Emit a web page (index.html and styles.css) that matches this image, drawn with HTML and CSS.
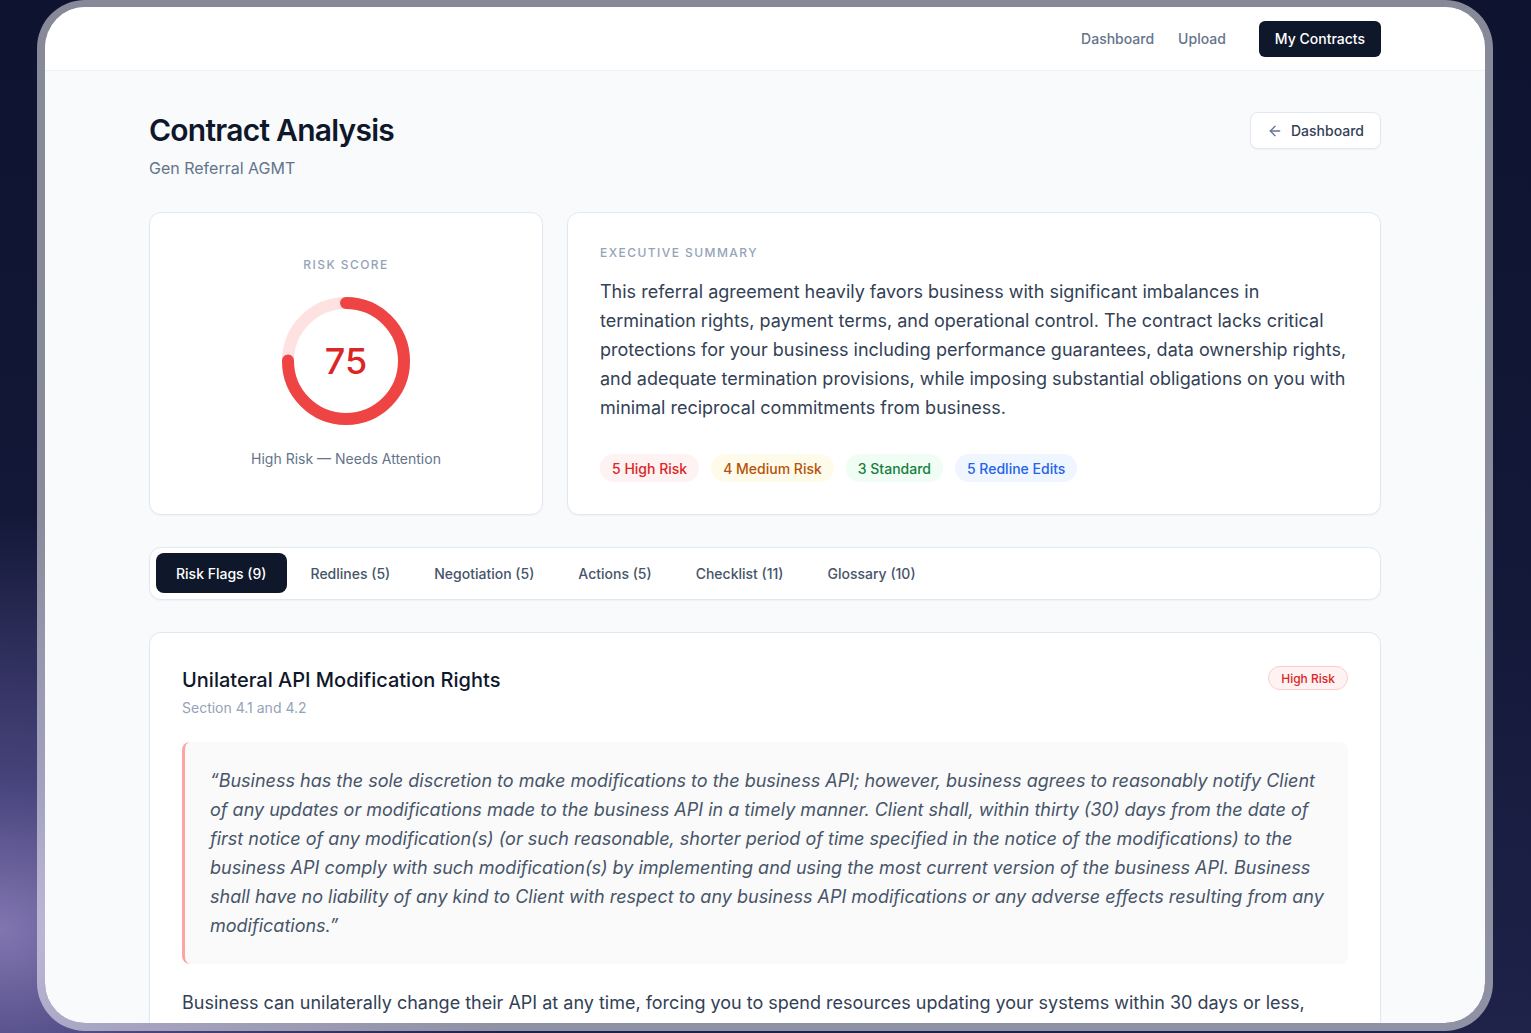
FILE: index.html
```html
<!DOCTYPE html>
<html lang="en">
<head>
<meta charset="utf-8">
<title>Contract Analysis</title>
<link rel="stylesheet" href="styles.css">
</head>
<body>
<div class="device">
  <div class="screen">
    <header class="topbar">
      <div class="container topbar-inner">
        <nav class="nav">
          <a class="nav-link">Dashboard</a>
          <a class="nav-link">Upload</a>
          <a class="nav-btn">My Contracts</a>
        </nav>
      </div>
    </header>
    <main class="container main">
      <div class="page-head">
        <div>
          <h1 class="title">Contract Analysis</h1>
          <p class="subtitle">Gen Referral AGMT</p>
        </div>
        <button class="back-btn">
          <svg width="16" height="16" viewBox="0 0 24 24" fill="none" stroke="currentColor" stroke-width="2" stroke-linecap="round" stroke-linejoin="round"><path d="M19 12H5"/><path d="M12 19l-7-7 7-7"/></svg>
          Dashboard
        </button>
      </div>

      <section class="overview">
        <div class="card score-card">
          <div class="eyebrow">Risk Score</div>
          <div class="ring">
            <svg width="128" height="128" viewBox="0 0 128 128">
              <circle cx="64" cy="64" r="58" fill="none" stroke="#fee2e2" stroke-width="12"/>
              <circle cx="64" cy="64" r="58" fill="none" stroke="#ef4444" stroke-width="12" stroke-linecap="round" stroke-dasharray="273.3 364.4" transform="rotate(-90 64 64)"/>
            </svg>
            <span class="ring-value">75</span>
          </div>
          <div class="score-label">High Risk — Needs Attention</div>
        </div>
        <div class="card summary-card">
          <div class="eyebrow">Executive Summary</div>
          <p class="summary-text">This referral agreement heavily favors business with significant imbalances in termination rights, payment terms, and operational control. The contract lacks critical protections for your business including performance guarantees, data ownership rights, and adequate termination provisions, while imposing substantial obligations on you with minimal reciprocal commitments from business.</p>
          <div class="pills">
            <span class="pill pill-red">5 High Risk</span>
            <span class="pill pill-amber">4 Medium Risk</span>
            <span class="pill pill-green">3 Standard</span>
            <span class="pill pill-blue">5 Redline Edits</span>
          </div>
        </div>
      </section>

      <div class="tabs">
        <button class="tab active">Risk Flags (9)</button>
        <button class="tab">Redlines (5)</button>
        <button class="tab">Negotiation (5)</button>
        <button class="tab">Actions (5)</button>
        <button class="tab">Checklist (11)</button>
        <button class="tab">Glossary (10)</button>
      </div>

      <article class="card flag-card">
        <div class="flag-head">
          <div>
            <h2 class="flag-title">Unilateral API Modification Rights</h2>
            <div class="flag-section">Section 4.1 and 4.2</div>
          </div>
          <span class="badge">High Risk</span>
        </div>
        <blockquote class="quote">“Business has the sole discretion to make modifications to the business API; however, business agrees to reasonably notify Client of any updates or modifications made to the business API in a timely manner. Client shall, within thirty (30) days from the date of first notice of any modification(s) (or such reasonable, shorter period of time specified in the notice of the modifications) to the business API comply with such modification(s) by implementing and using the most current version of the business API. Business shall have no liability of any kind to Client with respect to any business API modifications or any adverse effects resulting from any modifications.”</blockquote>
        <p class="flag-text">Business can unilaterally change their API at any time, forcing you to spend resources updating your systems within 30 days or less, potentially disrupting your operations with no recourse or compensation.</p>
      </article>
    </main>
  </div>
</div>
</body>
</html>
```

FILE: styles.css
```css
* { box-sizing: border-box; }
html, body { margin: 0; padding: 0; }
body {
  width: 1531px;
  height: 1033px;
  overflow: hidden;
  font-family: Inter, "Noto Sans", "Liberation Sans", sans-serif;
  background:
    radial-gradient(ellipse 520px 420px at 0px 930px, rgba(135,122,182,0.95) 0%, rgba(96,88,156,0.65) 35%, rgba(30,32,78,0) 100%),
    linear-gradient(180deg, #0e1330 0%, #131838 55%, #1f2249 100%);
}
.device {
  margin-left: 37px;
  width: 1456px;
  height: 1031px;
  border-style: solid;
  border-color: rgba(255,255,255,0.5);
  border-width: 7px 8px 8px 8px;
  border-radius: 48px;
  overflow: hidden;
}
.screen {
  height: 100%;
  background: #f8fafc;
  overflow: hidden;
}
.container {
  max-width: 1280px;
  margin: 0 auto;
  padding: 0 24px;
}
.topbar {
  background: #ffffff;
  border-bottom: 1px solid #eef1f5;
  height: 64px;
}
.topbar-inner {
  height: 63px;
  display: flex;
  align-items: center;
  justify-content: flex-end;
}
.nav { display: flex; align-items: center; }
.nav-link {
  font-size: 14px;
  font-weight: 500;
  color: #64748b;
  margin-right: 24px;
}
.nav-link:first-child { margin-left: 1px; }
.nav-link + .nav-link { margin-right: 33px; }
.nav-btn {
  height: 36px;
  display: inline-flex;
  align-items: center;
  padding: 0 16px;
  background: #0f172a;
  color: #ffffff;
  font-size: 14px;
  font-weight: 500;
  border-radius: 6px;
}
.main { padding-top: 41px; }
.page-head {
  display: flex;
  justify-content: space-between;
  align-items: flex-start;
}
.title {
  margin: 0;
  font-size: 30px;
  line-height: 36px;
  font-weight: 600;
  color: #0f172a;
  letter-spacing: -0.75px;
}
.subtitle {
  margin: 8px 0 0;
  font-size: 16px;
  line-height: 24px;
  color: #64748b;
}
.back-btn {
  height: 37px;
  display: inline-flex;
  align-items: center;
  gap: 8px;
  padding: 0 16px;
  background: #fff;
  border: 1px solid #e2e8f0;
  border-radius: 8px;
  font-family: inherit;
  font-size: 14px;
  font-weight: 500;
  color: #334155;
  box-shadow: 0 1px 2px rgba(15,23,42,0.04);
}
.back-btn svg { color: #64748b; }
.overview {
  margin-top: 32px;
  display: grid;
  grid-template-columns: 394px 1fr;
  gap: 24px;
}
.card {
  background: #ffffff;
  border: 1px solid #e2e8f0;
  border-radius: 12px;
  box-shadow: 0 1px 2px rgba(15,23,42,0.04);
}
.eyebrow {
  font-size: 12px;
  line-height: 16px;
  font-weight: 500;
  letter-spacing: 0.12em;
  text-transform: uppercase;
  color: #94a3b8;
}
.score-card {
  display: flex;
  flex-direction: column;
  align-items: center;
  justify-content: center;
  gap: 24px;
  padding: 32px 32px 34px;
}
.ring {
  position: relative;
  width: 128px;
  height: 128px;
}
.ring svg { display: block; }
.ring-value {
  position: absolute;
  inset: 0;
  display: flex;
  align-items: center;
  justify-content: center;
  font-size: 36px;
  font-weight: 500;
  color: #dc2626;
}
.score-label {
  font-size: 14px;
  line-height: 20px;
  color: #64748b;
}
.summary-card { padding: 32px; }
.summary-text {
  margin: 16px 0 0;
  font-size: 18px;
  line-height: 29px;
  color: #334155;
}
.pills {
  margin-top: 32px;
  display: flex;
  gap: 12px;
}
.pill {
  height: 28px;
  display: inline-flex;
  align-items: center;
  padding: 0 12px;
  border-radius: 999px;
  font-size: 14px;
  font-weight: 500;
}
.pill-red { background: #fef2f2; color: #dc2626; }
.pill-amber { background: #fffbeb; color: #b45309; }
.pill-green { background: #f0fdf4; color: #15803d; }
.pill-blue { background: #eff6ff; color: #2563eb; }
.tabs {
  margin-top: 32px;
  display: flex;
  gap: 4px;
  padding: 5px 6px 6px;
  background: #ffffff;
  border: 1px solid #e2e8f0;
  border-radius: 12px;
  box-shadow: 0 1px 2px rgba(15,23,42,0.04);
}
.tab {
  height: 40px;
  padding: 0 20px;
  border: 0;
  background: transparent;
  border-radius: 8px;
  font-family: inherit;
  font-size: 14px;
  font-weight: 500;
  color: #475569;
}
.tab.active { background: #0f172a; color: #ffffff; }
.flag-card {
  margin-top: 32px;
  padding: 33px 32px 32px;
}
.flag-head {
  display: flex;
  justify-content: space-between;
  align-items: flex-start;
}
.flag-title {
  margin: 0;
  font-size: 20px;
  line-height: 28px;
  font-weight: 500;
  color: #0f172a;
}
.flag-section {
  margin-top: 4px;
  font-size: 14px;
  line-height: 20px;
  color: #94a3b8;
}
.badge {
  height: 24px;
  display: inline-flex;
  align-items: center;
  padding: 0 12px;
  border-radius: 999px;
  background: #fef2f2;
  border: 1px solid #fecaca;
  color: #dc2626;
  font-size: 12px;
  font-weight: 500;
}
.quote {
  margin: 24px 0 0;
  padding: 24px 22px 24px 25px;
  background: #fafafa;
  border-left: 3px solid #fca5a5;
  border-radius: 8px;
  font-size: 18px;
  line-height: 29px;
  font-style: italic;
  color: #475569;
}
.flag-text {
  margin: 24px 0 0;
  font-size: 18px;
  line-height: 29px;
  color: #334155;
}
```
